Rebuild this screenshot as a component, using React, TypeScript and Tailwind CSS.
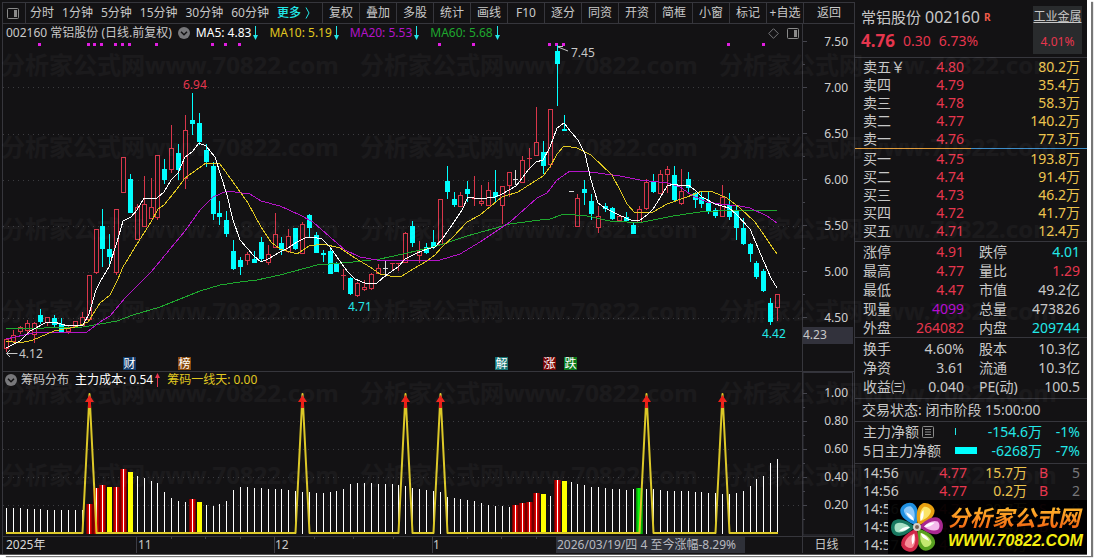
import type { ReactNode } from 'react'

type Kind = 'r' | 'c' | 'w'
// kind, high, body top, body bottom, low
type Candle = [Kind, number, number, number, number]

const candles: Candle[] = [
  ['r', 339, 339, 348, 352], ['r', 330, 335, 341, 341], ['r', 326, 327, 331, 334], ['r', 320, 323, 330, 335],
  ['r', 322, 323, 334, 343], ['c', 309, 315, 322, 324], ['r', 317, 317, 322, 326], ['c', 315, 318, 325, 327],
  ['c', 318, 324, 332, 333], ['r', 326, 328, 331, 334], ['r', 321, 321, 326, 328], ['r', 312, 317, 325, 326],
  ['r', 275, 275, 319, 319], ['r', 229, 229, 272, 274], ['c', 209, 226, 249, 267], ['c', 234, 249, 257, 264],
  ['r', 209, 209, 272, 275], ['r', 157, 157, 192, 192], ['c', 174, 179, 213, 213], ['r', 204, 207, 239, 239],
  ['r', 176, 204, 226, 226], ['r', 178, 207, 218, 218], ['r', 155, 155, 217, 220], ['c', 159, 169, 180, 184],
  ['r', 125, 148, 169, 173], ['c', 144, 153, 170, 180], ['r', 115, 130, 178, 189], ['c', 93, 120, 124, 135],
  ['c', 113, 123, 142, 145], ['c', 144, 150, 162, 167], ['c', 162, 166, 214, 220], ['c', 201, 213, 217, 225],
  ['c', 211, 220, 234, 237], ['c', 240, 251, 269, 270], ['c', 257, 260, 267, 275], ['r', 252, 254, 260, 265],
  ['c', 251, 259, 263, 263], ['c', 237, 242, 259, 261], ['r', 245, 254, 262, 265], ['r', 213, 234, 247, 247],
  ['c', 237, 243, 250, 255], ['r', 229, 236, 251, 253], ['c', 228, 228, 249, 250], ['r', 222, 224, 253, 254],
  ['c', 214, 215, 228, 237], ['c', 232, 235, 253, 253], ['c', 250, 253, 255, 262], ['c', 249, 251, 274, 274],
  ['c', 262, 264, 272, 272], ['r', 269, 275, 276, 290], ['c', 277, 278, 294, 295], ['r', 282, 283, 295, 297],
  ['r', 280, 287, 289, 291], ['r', 273, 274, 288, 290], ['r', 264, 268, 273, 274], ['w', 261, 268, 269, 277],
  ['r', 263, 263, 264, 271], ['r', 263, 263, 264, 271], ['r', 232, 233, 262, 263], ['c', 221, 226, 243, 247],
  ['r', 241, 251, 255, 263], ['c', 243, 247, 253, 254], ['c', 230, 242, 247, 249], ['r', 199, 199, 244, 244],
  ['c', 166, 181, 192, 199], ['c', 192, 199, 205, 207], ['r', 192, 195, 206, 207], ['c', 181, 189, 194, 202],
  ['r', 176, 198, 199, 206], ['r', 185, 201, 203, 206], ['r', 182, 190, 205, 206], ['c', 170, 192, 197, 202],
  ['r', 186, 186, 205, 224], ['r', 172, 172, 185, 197], ['w', 170, 179, 180, 185], ['r', 156, 160, 182, 183],
  ['r', 148, 158, 159, 170], ['r', 107, 142, 155, 156], ['c', 141, 152, 166, 174], ['r', 109, 109, 164, 168],
  ['c', 45, 51, 64, 106], ['c', 115, 129, 131, 131], ['w', 191, 191, 192, 192], ['r', 194, 198, 226, 226],
  ['c', 180, 189, 193, 205], ['c', 194, 201, 214, 220], ['r', 206, 216, 227, 233], ['c', 203, 206, 209, 212],
  ['c', 207, 208, 219, 220], ['r', 215, 216, 220, 221], ['c', 212, 217, 221, 222], ['c', 222, 225, 234, 234],
  ['r', 206, 209, 222, 222], ['r', 179, 182, 208, 210], ['c', 174, 182, 192, 193], ['r', 170, 174, 193, 193],
  ['r', 166, 169, 174, 193], ['c', 166, 175, 200, 202], ['r', 169, 191, 203, 205], ['c', 172, 179, 188, 193],
  ['c', 192, 193, 200, 208], ['c', 192, 197, 204, 208], ['c', 192, 203, 212, 214], ['c', 208, 210, 216, 218],
  ['r', 185, 197, 216, 216], ['c', 193, 205, 217, 220], ['c', 205, 211, 228, 240], ['c', 218, 228, 244, 245],
  ['c', 243, 244, 254, 262], ['c', 261, 263, 277, 279], ['c', 269, 271, 291, 292], ['c', 298, 303, 322, 325],
  ['r', 294, 294, 307, 321],
]

const chipTops = [
  508, 508, 508, 509, 509, 509, 510, 510, 510, 510, 510, 510, 504, 488, 485, 487, 487, 469, 472, 476,
  478, 481, 483, 492, 498, 501, 502, 499, 502, 505, 506, 504, 501, 490, 487, 487, 488, 488, 489, 489,
  489, 490, 491, 492, 492, 493, 493, 492, 491, 489, 484, 483, 483, 483, 484, 484, 484, 485, 486, 488,
  489, 490, 491, 492, 497, 498, 499, 500, 501, 503, 505, 506, 506, 507, 505, 503, 502, 493, 494, 496,
  480, 481, 482, 484, 485, 487, 487, 488, 489, 489, 490, 489, 488, 489, 489, 490, 491, 491, 491, 491,
  492, 492, 493, 493, 494, 494, 493, 491, 486, 479, 476, 463, 459,
]
const redBars = [12, 13, 14, 16, 17, 27, 74, 75, 76, 77, 80]
const yellowBars = [15, 18, 28, 78, 81]
const greenBars = [92]
const peaks = [12, 43, 58, 63, 93, 104]

const averages = [
  {
    color: '#1ea82e',
    points:
      '6,329 83,327 117,321 133,315 160,307 200,291 220,285 240,282 257,280 280,275 317,265 353,262 380,259 403,254 437,246 467,236 510,224 540,220 550,219 564,214 587,216 610,221 627,222 643,222 673,216 700,212 737,210 777,210',
  },
  {
    color: '#b414c8',
    points:
      '6,339 33,333 50,332 87,332 100,322 110,316 125,298 151,272 185,231 200,210 213,197 227,191 250,194 261,201 280,206 300,215 313,222 330,237 345,250 360,257 377,260 440,260 460,254 480,242 510,222 537,198 547,193 557,180 570,171 583,171 620,176 640,180 668,183 680,187 693,196 707,202 720,204 740,206 750,208 767,216 777,223',
  },
  {
    color: '#e0c820',
    points:
      '6,341 20,343 33,340 54,331 75,327 88,322 100,303 110,295 118,279 123,267 137,244 151,222 158,209 164,205 177,189 185,178 192,173 206,163 220,164 233,182 248,203 261,227 271,242 280,249 297,254 309,246 323,244 340,248 355,258 370,267 380,274 390,276 402,276 413,269 427,261 435,255 442,247 453,237 467,222 480,215 502,197 518,192 543,176 550,167 557,154 564,146 577,148 591,155 612,175 620,190 627,204 635,213 653,212 667,204 687,197 702,191 713,192 727,198 740,208 755,222 764,235 772,247 777,254',
  },
  {
    color: '#ffffff',
    points:
      '6,348 20,341 30,331 47,322 54,322 68,326 83,325 89,314 96,290 100,282 109,267 117,242 123,221 131,217 137,210 144,198 157,198 164,192 171,180 178,173 185,157 192,152 199,143 206,146 215,157 227,195 233,220 240,240 254,256 261,262 268,259 280,252 288,248 297,242 305,238 312,237 322,239 330,247 337,257 347,271 355,279 367,284 377,283 385,276 398,267 405,259 417,253 427,249 435,247 443,238 452,225 462,210 468,197 480,199 495,197 502,194 516,186 529,169 536,162 543,160 550,147 557,128 564,123 571,132 578,140 585,154 591,180 598,203 605,208 619,215 633,221 640,220 647,215 653,209 660,198 667,186 674,184 681,186 688,185 695,190 702,197 715,204 729,208 736,214 750,229 764,262 771,278 777,288',
  },
]

const signalDots = [39, 88, 94, 101, 115, 122, 129, 156, 212, 225, 239, 439, 473, 549, 556, 563, 728, 763]

const tags = [
  { x: 123, text: '财', fill: '#123c6c' },
  { x: 178, text: '榜', fill: '#8a480c' },
  { x: 495, text: '解', fill: '#157474' },
  { x: 543, text: '涨', fill: '#780606' },
  { x: 564, text: '跌', fill: '#0a7a1c' },
]

const periods = ['分时', '1分钟', '5分钟', '15分钟', '30分钟', '60分钟']
const tools = ['复权', '叠加', '多股', '统计', '画线', 'F10', '逐分', '同资', '开资', '简框', '小窗', '标记', '+自选']

const sells = [
  ['卖五￥', '4.80', '80.2万'],
  ['卖四', '4.79', '35.4万'],
  ['卖三', '4.78', '58.3万'],
  ['卖二', '4.77', '140.2万'],
  ['卖一', '4.76', '77.3万'],
]
const buys = [
  ['买一', '4.75', '193.8万'],
  ['买二', '4.74', '91.4万'],
  ['买三', '4.73', '46.2万'],
  ['买四', '4.72', '41.7万'],
  ['买五', '4.71', '12.4万'],
]

const RED = 'text-[#e6364e]'
const CYAN = 'text-[#22e8e8]'
const GRAY = 'text-[#c8c8c8]'

const quotes = [
  ['涨停', '4.91', RED, '跌停', '4.01', CYAN],
  ['最高', '4.77', RED, '量比', '1.29', RED],
  ['最低', '4.47', RED, '市值', '49.2亿', GRAY],
  ['现量', '4099', 'text-[#b408d0]', '总量', '473826', GRAY],
  ['外盘', '264082', RED, '内盘', '209744', CYAN],
]
const fundamentals = [
  ['换手', '4.60%', GRAY, '股本', '10.3亿', GRAY],
  ['净资', '3.61', GRAY, '流通', '10.3亿', GRAY],
  ['收益㈢', '0.040', GRAY, 'PE(动)', '100.5', GRAY],
]
const ticks = [
  ['14:56', '4.77', '15.7万', 'B', '5'],
  ['14:56', '4.77', '0.2万', 'B', '2'],
  ['14:56', '4.76', '20.7万', 'S', '9'],
  ['14:56', '4.77', '1.4万', 'B', '4'],
  ['14:57', '4.77', '2.4万', 'B', '3'],
]

const barX = (i: number) => Math.round(6 + 6.885 * i) + 0.5

function CandleShape({ i, candle }: { i: number; candle: Candle }) {
  const [kind, high, top, bottom, low] = candle
  const cx = barX(i)
  const color = kind === 'r' ? '#d8364a' : kind === 'c' ? '#00ffff' : '#dddddd'
  const hollow = kind === 'r' && bottom - top > 1
  return (
    <g stroke={color} shapeRendering="crispEdges">
      {low - high > 1 && <line x1={cx} x2={cx} y1={high} y2={low} />}
      {hollow ? (
        <rect x={cx - 2} y={top + 0.5} width={4} height={bottom - top} fill="#131214" />
      ) : (
        <rect x={cx - 2.5} y={top} width={5} height={bottom - top} fill={color} stroke="none" />
      )}
    </g>
  )
}

function GridLines({ ys }: { ys: number[] }) {
  return (
    <g stroke="#3c3c40" strokeDasharray="1 4" shapeRendering="crispEdges">
      {ys.map((y) => (
        <line key={y} x1={3} x2={802} y1={y + 0.5} y2={y + 0.5} />
      ))}
    </g>
  )
}

function PriceChart() {
  return (
    <svg viewBox="3 40 799 331" className="block h-[331px] w-full text-xs">
      <GridLines ys={[87, 134, 180, 226, 272, 318]} />
      {signalDots.map((x) => (
        <rect key={x} x={x - 1} y={43} width={3} height={3} fill="#e01ee0" />
      ))}
      {candles.map((c, i) => (
        <CandleShape key={i} i={i} candle={c} />
      ))}
      {averages.map((a) => (
        <polyline key={a.color} points={a.points} fill="none" stroke={a.color} shapeRendering="crispEdges" />
      ))}
      <text x={183} y={89} fill="#e6364e">6.94</text>
      <path d="M558 46.5h5M558 47l10 4" fill="none" stroke="#c8c8c8" />
      <text x={571} y={57} fill="#c8c8c8">7.45</text>
      <path d="M6.500 353.500h11M10 350l-3.500 3.500 3.500 3.500" fill="none" stroke="#c8c8c8" />
      <text x={19} y={358} fill="#c8c8c8">4.12</text>
      <text x={348} y={311} fill="#22e8e8">4.71</text>
      <text x={762} y={338} fill="#22e8e8">4.42</text>
      {tags.map((t) => (
        <g key={t.text}>
          <rect x={t.x} y={357} width={13} height={13} fill={t.fill} />
          <text x={t.x + 0.5} y={368} fill="#ffffff">{t.text}</text>
        </g>
      ))}
    </svg>
  )
}

function PriceAxis() {
  const labels = ['7.50', '7.00', '6.50', '6.00', '5.50', '5.00', '4.50']
  return (
    <svg viewBox="803 24 51 347" className="block h-[347px] w-[51px] text-xs">
      {labels.map((label, i) => (
        <g key={label}>
          <path d={`M803 ${41.5 + i * 46}h4M803 ${64.5 + i * 46}h2`} stroke="#44444c" />
          <text x={848} y={46 + i * 46} textAnchor="end" fill="#d0d0d0">{label}</text>
        </g>
      ))}
      <rect x={803} y={327} width={50} height={17} fill="#32323c" />
      <text x={803} y={339} fill="#c8c8c8">4.23</text>
    </svg>
  )
}

function ChipChart() {
  const line = [
    '6,533',
    ...peaks.flatMap((p) => [`${barX(p - 1)},533`, `${barX(p)},394`, `${barX(p + 1)},533`]),
    '778,533',
  ].join(' ')
  return (
    <svg viewBox="3 388 799 148" className="block h-[148px] w-full">
      <defs>
        <linearGradient id="redBar">
          <stop offset="0" stopColor="#5a0000" />
          <stop offset="0.35" stopColor="#e00000" />
          <stop offset="0.65" stopColor="#e00000" />
          <stop offset="1" stopColor="#5a0000" />
        </linearGradient>
        <linearGradient id="greenBar">
          <stop offset="0" stopColor="#008000" />
          <stop offset="0.4" stopColor="#10ff10" />
          <stop offset="1" stopColor="#008000" />
        </linearGradient>
      </defs>
      <GridLines ys={[421, 449, 477, 505]} />
      {chipTops.map((y, i) => {
        const x = barX(i)
        const h = 534 - y
        if (yellowBars.includes(i)) return <rect key={i} x={x - 2.5} y={y} width={5} height={h} fill="#ffff00" />
        if (greenBars.includes(i)) return <rect key={i} x={x - 3.5} y={y} width={7} height={h} fill="url(#greenBar)" />
        return (
          <g key={i}>
            {redBars.includes(i) && <rect x={x - 3.5} y={y} width={7} height={h} fill="url(#redBar)" />}
            <rect x={x - 0.5} y={y} width={1} height={h} fill="#ffffff" />
          </g>
        )
      })}
      <polyline points={line} fill="none" stroke="#dcc828" strokeWidth={2} strokeLinejoin="round" />
      {peaks.map((p) => (
        <path key={p} transform={`translate(${barX(p)} 395)`} d="M0 0l4.500 7h-3v6h-3v-6h-3z" fill="#ec2018" />
      ))}
    </svg>
  )
}

function ChipAxis() {
  const labels = ['1.00', '0.80', '0.60', '0.40', '0.20']
  return (
    <svg viewBox="803 372 51 164" className="block h-[164px] w-[51px] text-xs">
      <rect x={803} y={372.5} width={49.500} height={162.500} fill="none" stroke="#33333b" />
      {labels.map((label, i) => (
        <g key={label}>
          <path d={`M803 ${393.5 + i * 28}h4M803 ${407.5 + i * 28}h2`} stroke="#44444c" />
          <text x={848} y={397 + i * 28} textAnchor="end" fill="#d0d0d0">{label}</text>
        </g>
      ))}
    </svg>
  )
}

function TimeAxis() {
  return (
    <svg viewBox="3 537 799 16" className="block h-4 w-full text-xs">
      <path d="M136.500 537v16M274.500 537v16M432.500 537v16" stroke="#3c3c44" />
      <path d="M171.500 537v2M205.500 537v2M240.500 537v2M314.500 537v2M353.500 537v2M393.500 537v2M467.500 537v2M501.500 537v2M536.500 537v2" stroke="#3c3c44" />
      <text x={6} y={549} fill="#d8d8d8">2025年</text>
      <text x={138} y={549} fill="#c8c8c8">11</text>
      <text x={275} y={549} fill="#c8c8c8">12</text>
      <text x={433} y={549} fill="#c8c8c8">1</text>
      <rect x={556} y={537} width={189} height={16} fill="#2e3038" />
      <text x={557} y={549} fill="#b8bac0">2026/03/19/四 4 至今涨幅-8.29%</text>
    </svg>
  )
}

function Arrow({ up = false, color }: { up?: boolean; color: string }) {
  return (
    <svg viewBox="0 0 7 14" className="h-[14px] w-[7px]" aria-hidden="true">
      <path d={up ? 'M3.500 14V3' : 'M3.500 0v11'} stroke={color} />
      <path d={up ? 'M3.500 0L6 5H1z' : 'M3.500 14L1 9h5z'} fill={color} />
    </svg>
  )
}

function PaneIcon() {
  return (
    <svg viewBox="0 0 12 11" className="h-[11px] w-3" aria-hidden="true">
      <rect x={0.5} y={0.5} width={11} height={10} rx={1} fill="none" stroke="#8a8a8a" />
      <rect x={7} y={2} width={3} height={7} fill="#8a8a8a" />
    </svg>
  )
}

function Collapse({ label }: { label: string }) {
  return (
    <button aria-label={label} className="h-3 w-3 shrink-0">
      <svg viewBox="0 0 12 12" className="h-3 w-3">
        <circle cx={6} cy={6} r={6} fill="#77777a" />
        <path d="M3 4.800l3 3 3-3" fill="none" stroke="#131214" strokeWidth={1.500} />
      </svg>
    </button>
  )
}

function Indicator({ text, up, className, color }: { text: string; up?: boolean; className: string; color: string }) {
  return (
    <span className={`flex items-center gap-px ${className}`}>
      {text}
      <Arrow up={up} color={color} />
    </span>
  )
}

function OrderTable({ rows, label }: { rows: string[][]; label: string }) {
  return (
    <table className="w-full table-fixed" aria-label={label}>
      <tbody>
        {rows.map(([name, price, volume]) => (
          <tr key={name} className="h-[18px]">
            <th scope="row" className="w-[60px] pl-2 text-left font-normal">{name}</th>
            <td className="w-[49px] text-right text-[#e6364e]">{price}</td>
            <td className="pr-[7px] text-right text-[#ecc44e]">{volume}</td>
          </tr>
        ))}
      </tbody>
    </table>
  )
}

function QuoteTable({ rows, label }: { rows: string[][]; label: string }) {
  return (
    <table className="w-full table-fixed leading-[19px]" aria-label={label}>
      <tbody>
        {rows.map(([a, av, ac, b, bv, bc]) => (
          <tr key={a} className="h-[19px]">
            <th scope="row" className="w-[56px] pl-2 text-left font-normal">{a}</th>
            <td className={`w-[53px] text-right ${ac}`}>{av}</td>
            <th scope="row" className="w-[66px] pl-[15px] text-left font-normal">{b}</th>
            <td className={`pr-[7px] text-right ${bc}`}>{bv}</td>
          </tr>
        ))}
      </tbody>
    </table>
  )
}

function Section({ children }: { children: ReactNode }) {
  return <div className="border-t border-[#36363c]">{children}</div>
}

function Flower() {
  const petals = [
    { angle: -27, color: '#1f8fe0', inner: '#8cc8f8' },
    { angle: 30, color: '#e8a010', inner: '#fbe468' },
    { angle: 86, color: '#a82890', inner: '#f4b8ec' },
    { angle: 148, color: '#58a020', inner: '#c4e870' },
    { angle: 204, color: '#d02848', inner: '#f88c98' },
    { angle: 268, color: '#187860', inner: '#a8e0c4' },
  ]
  return (
    <svg viewBox="-27 -27 54 54" className="h-[54px] w-[54px]" aria-hidden="true">
      {petals.map((p) => (
        <g key={p.angle} transform={`rotate(${p.angle})`}>
          <path d="M0-2C-6-8-11-17-7-23C-4-27 4-27 7-23C11-17 6-8 0-2z" fill={p.color} />
          <path d="M0-7C-4-11-6-17-4-21C-2-23 2-23 4-21C6-17 4-11 0-7z" fill={p.inner} />
          <path d="M0-7C-3-11-4-15-3-18C-1-15 2-12 0-7z" fill="#ffffff" />
        </g>
      ))}
      <circle r={4} fill="#d8d0c8" />
      <circle r={2} fill="#7a6050" />
    </svg>
  )
}

function Watermark() {
  return (
    <div
      aria-hidden="true"
      className="pointer-events-none absolute inset-0 flex flex-col overflow-hidden pt-6 pl-px text-2xl leading-[82px] font-bold text-white/[0.035] select-none"
    >
      {[0, 1, 2, 3, 4, 5].map((row) => (
        <div key={row} className="flex h-[82px]">
          {[0, 1, 2].map((col) => (
            <span key={col} className="w-[359px] shrink-0 whitespace-nowrap">分析家公式网www.70822.com</span>
          ))}
        </div>
      ))}
    </div>
  )
}

export default function App() {
  return (
    <div className="bg-white pr-[11px] pb-1 font-['Noto_Sans','Noto_Sans_CJK_SC',sans-serif] text-xs text-[#c8c8c8]">
      <div className="relative flex border-b border-[#555] bg-[#131214] pt-[2px] pl-[2px] shadow-[4px_1px_0_#ffffff,6px_2px_1px_#777777]">
        <main className="min-w-0 flex-1 border-l border-[#36363c]">
          <nav className="flex h-[22px] border-y border-[#36363c] leading-5 whitespace-nowrap">
            <button aria-label="侧栏" className="flex w-[23px] items-center border-r border-[#36363c] pl-1">
              <PaneIcon />
            </button>
            <div className="flex flex-1 gap-2 pl-1">
              {periods.map((p) => (
                <button key={p}>{p}</button>
              ))}
              <button className="flex items-center gap-1 font-medium text-[#22e8e8]">
                更多
                <svg viewBox="0 0 5 12" className="h-3 w-[5px]" aria-hidden="true">
                  <path d="M1 0.500L4 6 1 11.500" fill="none" stroke="currentColor" />
                </svg>
              </button>
            </div>
            {tools.map((t) => (
              <button key={t} className="w-[37px] border-l border-[#36363c]">{t}</button>
            ))}
            <button className="w-[51px] border-l border-[#36363c]">返回</button>
          </nav>

          <div className="flex">
            <section className="min-w-0 flex-1" aria-label="日线">
              <header className="flex h-4 items-center gap-[6px] pt-[2px] pl-[3px] leading-4 whitespace-nowrap">
                <span>002160 常铝股份 (日线.前复权)</span>
                <Collapse label="折叠均线" />
                <div className="flex gap-[10px]">
                  <Indicator text="MA5: 4.83" className="text-white" color="#22e8e8" />
                  <Indicator text="MA10: 5.19" className="text-[#e0c820]" color="#22e8e8" />
                  <Indicator text="MA20: 5.53" className="text-[#b414c8]" color="#22e8e8" />
                  <Indicator text="MA60: 5.68" className="text-[#1ea82e]" color="#22e8e8" />
                </div>
                <div className="ml-auto flex items-center gap-2 pr-[3px]">
                  <svg viewBox="0 0 11 11" className="h-[11px] w-[11px]" aria-hidden="true">
                    <path d="M5.500 0.700L10.300 5.500 5.500 10.300 0.700 5.500z" fill="none" stroke="#77777a" />
                  </svg>
                  <PaneIcon />
                </div>
              </header>
              <PriceChart />
            </section>
            <div className="w-[52px] border-l border-[#36363c]">
              <PriceAxis />
            </div>
          </div>

          <div className="flex border-t border-[#36363c]">
            <section className="min-w-0 flex-1" aria-label="筹码分布">
              <header className="flex h-4 items-center gap-[6px] pl-[2px] leading-4 whitespace-nowrap">
                <div className="flex items-center gap-1">
                  <Collapse label="折叠筹码" />
                  <span>筹码分布</span>
                </div>
                <Indicator text="主力成本: 0.54" up className="text-white" color="#e6364e" />
                <span className="text-[#e0c820]">筹码一线天: 0.00</span>
              </header>
              <ChipChart />
            </section>
            <div className="w-[52px] border-l border-[#36363c]">
              <ChipAxis />
            </div>
          </div>

          <div className="flex border-t border-[#36363c]">
            <div className="min-w-0 flex-1">
              <TimeAxis />
            </div>
            <div className="w-[52px] border-l border-[#36363c] pr-1 text-center leading-4">日线</div>
          </div>
        </main>

        <aside className="relative w-[233px] border-l border-[#36363c] text-sm leading-[18px] whitespace-nowrap">
          <header className="flex h-[55px] justify-between pt-1 pr-[5px] pl-[6px]">
            <div>
              <h1 className="flex h-[22px] items-center gap-1 text-[15px]">
                常铝股份 <span className="text-base">002160</span>
                <span className="text-[10px] leading-5 font-bold text-[#f05a48]">R</span>
              </h1>
              <p className="flex h-[26px] items-center gap-2 text-[#e6364e]">
                <strong className="text-[17px]">4.76</strong>
                <span>0.30</span>
                <span>6.73%</span>
              </p>
            </div>
            <a href="#industry" className="flex h-12 w-[49px] flex-col justify-between bg-[#292b2d] pt-[2px] pb-[3px] text-center text-xs">
              <span className="leading-[18px] underline">工业金属</span>
              <span className="leading-[18px] text-[#e6364e]">4.01%</span>
            </a>
          </header>
          <Section>
            <OrderTable rows={sells} label="卖盘" />
            <div className="flex h-px">
              <div className="w-1/2 bg-[#e09a38]" />
              <div className="w-1/2 bg-[#3c8cc8]" />
            </div>
            <div className="py-px">
              <OrderTable rows={buys} label="买盘" />
            </div>
          </Section>
          <Section>
            <QuoteTable rows={quotes} label="行情" />
          </Section>
          <Section>
            <div className="pt-px pb-[2px]">
              <QuoteTable rows={fundamentals} label="财务" />
            </div>
          </Section>
          <Section>
            <p className="pl-[7px] leading-[22px]">交易状态: 闭市阶段 15:00:00</p>
          </Section>
          <Section>
            <table className="mb-[3px] w-full table-fixed leading-[19px]" aria-label="资金">
              <tbody>
                <tr className="h-[19px]">
                  <th scope="row" className="w-[100px] pl-2 text-left font-normal">
                    <span className="flex items-center gap-[3px]">
                      主力净额
                      <svg viewBox="0 0 12 12" className="h-3 w-3" aria-hidden="true">
                        <rect x={0.5} y={0.5} width={11} height={11} rx={1} fill="none" stroke="#8a8a8a" />
                        <path d="M3 3.500h6M3 6h6M3 8.500h6" stroke="#8a8a8a" />
                      </svg>
                    </span>
                  </th>
                  <td className="w-[24px]"><div className="h-[7px] w-px bg-[#22e8e8]" /></td>
                  <td className="text-right text-[#22e8e8]">-154.6万</td>
                  <td className="w-[45px] pr-[7px] text-right text-[#22e8e8]">-1%</td>
                </tr>
                <tr className="h-[19px]">
                  <th scope="row" className="pl-2 text-left font-normal">5日主力净额</th>
                  <td><div className="h-[7px] w-[22px] bg-[#00ffff]" /></td>
                  <td className="text-right text-[#22e8e8]">-6268万</td>
                  <td className="pr-[7px] text-right text-[#22e8e8]">-7%</td>
                </tr>
              </tbody>
            </table>
          </Section>
          <Section>
            <table className="w-full table-fixed" aria-label="成交明细">
              <tbody>
                {ticks.map(([time, price, volume, side, count], i) => (
                  <tr key={i} className="h-[18px]">
                    <td className="w-[60px] pl-2">{time}</td>
                    <td className="w-[52px] text-right text-[#e6364e]">{price}</td>
                    <td className="w-[60px] text-right text-[#ecc44e]">{volume}</td>
                    <td className="pl-3 text-[#e6364e]">{side}</td>
                    <td className="pr-[7px] text-right text-[#77777a]">{count}</td>
                  </tr>
                ))}
              </tbody>
            </table>
          </Section>
        </aside>

        <Watermark />

        <a href="#home" className="absolute right-0 bottom-0 flex h-[54px] w-[199px] items-center bg-black/95 pl-[2px]">
          <Flower />
          <span className="flex flex-col gap-1 pl-1 font-bold whitespace-nowrap italic">
            <span className="bg-linear-to-b from-[#ffc030] to-[#f06010] bg-clip-text text-[22px] leading-6 text-transparent">分析家公式网</span>
            <span className="font-['Liberation_Sans',sans-serif] text-base leading-4 text-[#f4ec10]">WWW.70822.COM</span>
          </span>
        </a>
      </div>
    </div>
  )
}
